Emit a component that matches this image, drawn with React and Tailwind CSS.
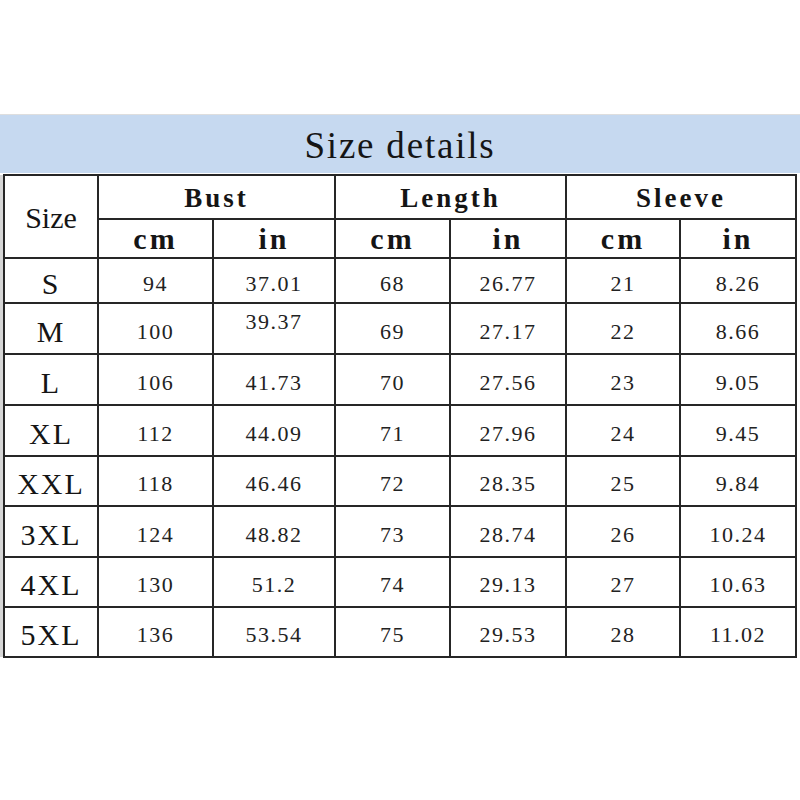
import React from 'react';

const rows = [
  ['S', '94', '37.01', '68', '26.77', '21', '8.26'],
  ['M', '100', '39.37', '69', '27.17', '22', '8.66'],
  ['L', '106', '41.73', '70', '27.56', '23', '9.05'],
  ['XL', '112', '44.09', '71', '27.96', '24', '9.45'],
  ['XXL', '118', '46.46', '72', '28.35', '25', '9.84'],
  ['3XL', '124', '48.82', '73', '28.74', '26', '10.24'],
  ['4XL', '130', '51.2', '74', '29.13', '27', '10.63'],
  ['5XL', '136', '53.54', '75', '29.53', '28', '11.02'],
];

const rowHeights = ['h-[45px]', 'h-[51px]', 'h-[51px]', 'h-[51px]', 'h-[50px]', 'h-[51px]', 'h-[50px]', 'h-[50px]'];

const cell = 'font-[Liberation_Serif] border-2 border-[#262626] text-center align-middle p-0 leading-none';

const App = () => {
  return (
    <div className="font-serif w-[800px] h-[800px] bg-white text-[#151515]">
      <div className="h-[114px]" />
      <div className="h-px bg-[#dedede]" />
      <div className="h-[58px] bg-[#c6d9f0] flex items-center justify-center">
        <span className="font-[family-name:Liberation_Serif] text-[37px] tracking-[1.8px] leading-none pt-[2px]">
          Size details
        </span>
      </div>
      <div className="flex mt-[1px]">
        <div className="w-[3px] bg-[#d6d6d6] mt-[1px] mb-[1px]" />
        <table className="font-[Liberation_Serif] border-collapse table-fixed w-[792px]">
          <colgroup>
            <col className="w-[94px]" />
            <col className="w-[115px]" />
            <col className="w-[122px]" />
            <col className="w-[115px]" />
            <col className="w-[116px]" />
            <col className="w-[114px]" />
            <col className="w-[116px]" />
          </colgroup>
          <thead>
            <tr className="h-[44px]">
              <th rowSpan={2} className={`${cell} font-normal text-[30px] pt-[2px]`}>Size</th>
              <th colSpan={2} className={`${cell} font-bold text-[27px] tracking-[3px] pt-[2px]`}>Bust</th>
              <th colSpan={2} className={`${cell} font-bold text-[27px] tracking-[3px] pt-[2px]`}>Length</th>
              <th colSpan={2} className={`${cell} font-bold text-[27px] tracking-[3px] pt-[2px]`}>Sleeve</th>
            </tr>
            <tr className="h-[39px]">
              {['cm', 'in', 'cm', 'in', 'cm', 'in'].map((u, i) => (
                <th key={i} className={`${cell} font-bold text-[30px] tracking-[3px]`}>
                  {u}
                </th>
              ))}
            </tr>
          </thead>
          <tbody>
            {rows.map((r, ri) => (
              <tr key={r[0]} className={rowHeights[ri]}>
                <td className={`${cell} text-[30px] tracking-[2px] pt-[6px]`}>{r[0]}</td>
                {r.slice(1).map((v, vi) => (
                  <td
                    key={vi}
                    className={`${cell} text-[22px] tracking-[1.5px] text-[#222] ${
                      ri === 1 && vi === 1 ? 'pb-[14px]' : 'pt-[6px]'
                    }`}
                  >
                    {v}
                  </td>
                ))}
              </tr>
            ))}
          </tbody>
        </table>
      </div>
    </div>
  );
};

export default App;
